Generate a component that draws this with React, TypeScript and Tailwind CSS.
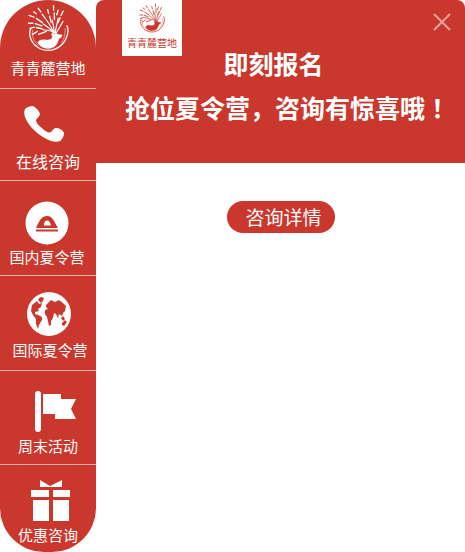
import type { ReactNode } from "react";

function DeerLogo({ className }: { className: string }) {
  return (
    <svg viewBox="75 9 132 147" className={className} fill="none" stroke="currentColor" strokeLinecap="round" aria-hidden="true">
      <path d="M88 84C80 104 88 132 117 146C148 160 184 144 197 113C204 96 203 84 199 76" strokeWidth="4" />
      <path d="M94 90C90 106 96 124 112 136M193 84C195 98 192 114 182 127" strokeWidth="1.5" />
      <path
        d="M110 126C114 118 124 117 136 119C146 120 153 116 155 109C151 106 151 100 154 98L161 102L166 97L170 102L185 104L181 112L175 114C172 122 170 131 163 138C154 146 138 147 126 142C118 139 112 133 110 126Z"
        fill="currentColor"
        strokeWidth="1"
      />
      <path d="M158 98C154 90 142 90 126 88M159 98C150 86 140 80 126 70M159 98C154 84 146 72 136 58M160 98C160 84 158 74 154 58M163 98C165 84 168 74 172 52M166 98C173 86 180 76 187 62" strokeWidth="3.5" />
      <path
        d="M111 22L119 33M123 40L133 54M140 26L143 38M146 46L151 66M158 14L158 28M160 36L161 56M172 28L168 42M187 31L181 44M178 51L172 66M83 44L98 49M105 53L124 66M97 33L105 39M81 68L95 68M102 69L122 76M86 84L99 80M105 81L124 85M94 102L108 93M112 102L136 93"
        strokeWidth="4"
      />
    </svg>
  );
}

function PhoneIcon() {
  return (
    <svg viewBox="0 0 40 37" className="h-[37px] w-10" fill="currentColor" aria-hidden="true">
      <path d="M1 3C3 1 6 0 9 0C11 1 15 4 16 8C16 10 13 12 12 14C12 17 15 20 19 23C22 26 25 27 27 26C29 24 30 22 32 22C35 22 39 24 40 27C40 30 38 34 36 35C32 37 25 35 19 31C11 26 4 19 1 11C0 8 0 5 1 3Z" />
    </svg>
  );
}

function TentIcon() {
  return (
    <svg viewBox="0 0 44 44" className="size-11" aria-hidden="true">
      <circle cx="22" cy="22" r="21.5" fill="white" />
      <path d="M11 27C14 21 16 15 22 15C28 15 29 21 33 27Z" fill="#ca372c" />
      <path d="M19 24.5C19 21 20 19.500 22 19.500C24 19.500 25 21 26 24.500Z" fill="white" />
      <path d="M11 29.500H33" stroke="#ca372c" strokeWidth="2" />
    </svg>
  );
}

function GlobeIcon() {
  return (
    <svg viewBox="0 0 44 44" className="size-11" aria-hidden="true">
      <circle cx="22" cy="22" r="22" fill="white" />
      <g fill="#ca372c">
        <path d="M5 13L10 9L12 12L15 11L14 15L11 17L12 19L8 20L8 22L11 23L15 25L15 28L12 33L11 37L9 32L9 27L6 23L4 19Z" />
        <path d="M11 7L14 5L17 6L16 9L14 11L12 9Z" />
        <path d="M19 13L22 10L24 8L28 10L32 8L36 11L39 14L38 19L36 21L35 24L32 22L31 26L29 22L27 21L26 26L24 29L24 33L22 34L21 29L20 25L18 22L18 18L21 17L19 15Z" />
        <path d="M34 26L36 24L38 27L36 29ZM35 31L38 28L40 30L37 34L35 33Z" />
      </g>
    </svg>
  );
}

function FlagIcon() {
  return (
    <svg viewBox="0 0 41 41" className="size-[41px]" fill="currentColor" aria-hidden="true">
      <rect x="0" y="0" width="6" height="41" rx="3" />
      <path d="M8 3H26V8H41L36 18L41 28H20V23H8Z" />
    </svg>
  );
}

function GiftIcon() {
  return (
    <svg viewBox="0 0 39 41" className="h-[41px] w-[39px]" fill="currentColor" aria-hidden="true">
      <path d="M9 0L19 6L31 0V7H9ZM0 10H18V17H0ZM22 10H39V17H22ZM2 20H18V41H2ZM22 20H38V41H22Z" />
    </svg>
  );
}

function MenuItem({ className, label, children }: { className: string; label: string; children: ReactNode }) {
  return (
    <button type="button" className={`flex w-full flex-col items-center border-t border-[#e9b0ab] whitespace-nowrap ${className}`}>
      {children}
      <span>{label}</span>
    </button>
  );
}

export default function App() {
  return (
    <div className="flex min-h-screen bg-white font-['Noto_Sans_CJK_SC',sans-serif] text-white">
      <nav className="flex w-24 shrink-0 flex-col overflow-hidden rounded-t-[48px] rounded-b-[44px] bg-[#ca372c] text-[15px] leading-5">
        <div className="flex h-[88px] flex-col items-center pt-1">
          <DeerLogo className="h-12 w-11" />
          <span className="pt-1.5 leading-5">青青麓营地</span>
        </div>
        <MenuItem label="在线咨询" className="h-[92px] gap-2 pt-[17px] text-base leading-5">
          <div className="pr-2">
            <PhoneIcon />
          </div>
        </MenuItem>
        <MenuItem label="国内夏令营" className="h-[95px] gap-0.5 pt-5 pr-0.5">
          <TentIcon />
        </MenuItem>
        <MenuItem label="国际夏令营" className="h-[95px] gap-1 pt-4 pl-1">
          <div className="pr-0.5">
            <GlobeIcon />
          </div>
        </MenuItem>
        <MenuItem label="周末活动" className="h-[94px] gap-1 pt-5">
          <div className="pl-3.5">
            <FlagIcon />
          </div>
        </MenuItem>
        <MenuItem label="优惠咨询" className="grow gap-1 pt-[15px]">
          <div className="pl-1">
            <GiftIcon />
          </div>
        </MenuItem>
      </nav>
      <main className="min-w-0 grow">
        <header className="h-[163px] rounded-t-lg bg-[#ca372c]">
          <div className="flex h-[47px] items-start justify-between pr-3 pl-[26px]">
            <div className="flex h-14 w-15 shrink-0 flex-col items-center bg-white pt-[3px] text-[#ca372c]">
              <DeerLogo className="h-[30px] w-7" />
              <span className="pt-1 text-[10px] leading-3">青青麓营地</span>
            </div>
            <button type="button" aria-label="关闭" className="mt-3 text-[#e9a29c]">
              <svg viewBox="0 0 22 20" className="h-5 w-[22px]" fill="none" stroke="currentColor" strokeWidth="2" aria-hidden="true">
                <path d="M3 2L19 18M19 2L3 18" />
              </svg>
            </button>
          </div>
          <h1 className="text-center text-[25px] leading-8 font-bold whitespace-nowrap">
            <span className="block pr-3.5">即刻报名</span>
            <span className="block pt-3 pl-3.5">
              抢位夏令营，咨询有惊喜哦<span className="font-['Noto_Sans_CJK_JP',sans-serif]">！</span>
            </span>
          </h1>
        </header>
        <div className="flex justify-center pt-[38px]">
          <button type="button" className="h-8 w-27 rounded-full bg-[#ca372c] pl-1.5 text-[19px] leading-8">
            咨询详情
          </button>
        </div>
      </main>
    </div>
  );
}
